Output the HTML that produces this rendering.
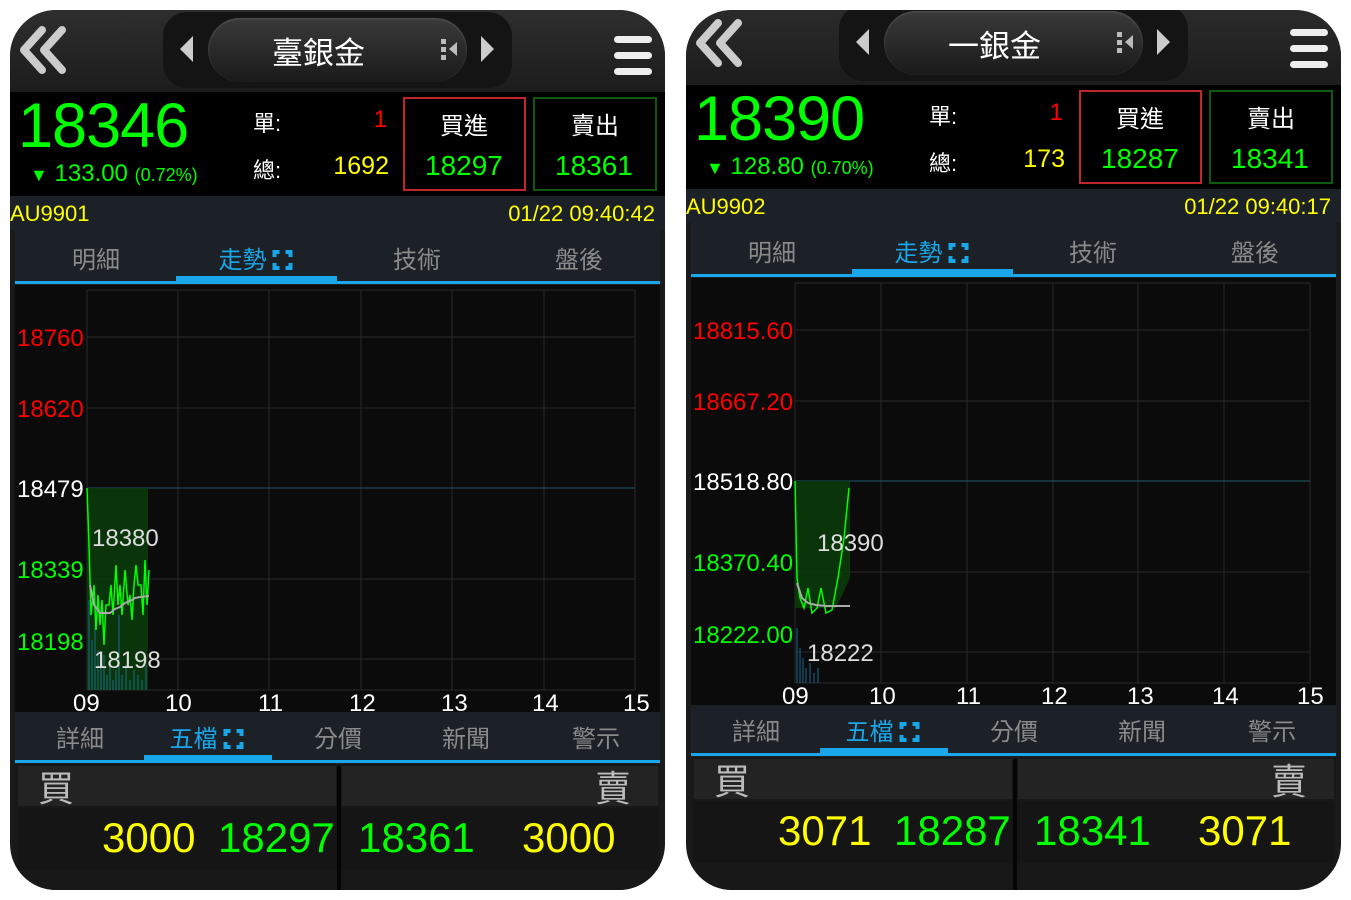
<!DOCTYPE html>
<html><head><meta charset="utf-8"><style>
*{margin:0;padding:0;box-sizing:border-box}
body{width:1351px;height:900px;background:#fff;position:relative;overflow:hidden;font-family:"Liberation Sans","Noto Sans CJK TC",sans-serif}
.p{position:absolute;top:10px;width:655px;height:880px;border-radius:46px;overflow:hidden;background:#1a1a1a}
.in{position:absolute;left:0;top:0;width:655px;height:900px}
.a{position:absolute;white-space:nowrap}
.hdr{position:absolute;left:0;top:0;width:655px;height:82px;background:linear-gradient(#2e2e2e,#1c1c1c)}
.pc{position:absolute;left:153px;top:2px;width:349px;height:76px;border-radius:24px;background:#141414}
.pi{position:absolute;left:198px;top:8px;width:259px;height:64px;border-radius:32px;background:linear-gradient(#3a3a3a,#1a1a1a);box-shadow:inset 0 1px 2px #555}
.q{position:absolute;left:0;top:82px;width:655px;height:104px;background:#000}
.info{position:absolute;left:0;top:186px;width:655px;height:34px;background:#1b2127}
.tabs{position:absolute;left:5px;top:220px;width:645px;height:55px;background:#1b2127}
.g{color:#0f0}.y{color:#ff0}.r{color:#f00}.w{color:#fff}
.tab{position:absolute;font-size:24px;color:#8a8a8a;transform:translateX(-50%)}
.act{color:#1aa7ea}
.br{display:inline-block;vertical-align:-3px;margin-left:5px}
.chart{position:absolute;left:5px;top:275px;width:645px;height:427px;background:#0b0b0b}
.bt{position:absolute;left:5px;top:702px;width:645px;height:52px;background:#1b2127}
.ob{position:absolute;left:5px;top:754px;width:645px;height:140px;background:#181818}
</style></head><body>

<!-- LEFT PANEL -->
<div class="p" style="left:10px"><div class="in">
 <div class="hdr"></div>
 <svg class="a" style="left:6px;top:16px" width="56" height="50" viewBox="0 0 56 50"><path d="M26 4 L8 24 L26 44 M46 4 L28 24 L46 44" stroke="#ccc" stroke-width="8" fill="none" stroke-linecap="round" stroke-linejoin="round"/></svg>
 <div class="pc"></div><div class="pi"></div>
 <svg class="a" style="left:168px;top:24px" width="16" height="30"><path d="M15 2 L2 15 L15 28Z" fill="#ccc"/></svg>
 <svg class="a" style="left:470px;top:24px" width="16" height="30"><path d="M1 2 L14 15 L1 28Z" fill="#ccc"/></svg>
 <svg class="a" style="left:430px;top:28px" width="20" height="24"><rect x="1" y="1" width="5" height="5" fill="#bbb"/><rect x="1" y="9" width="5" height="5" fill="#bbb"/><rect x="1" y="17" width="5" height="5" fill="#bbb"/><path d="M17 4 L9 11 L17 18Z" fill="#bbb"/></svg>
 <div class="a w" style="left:262px;top:18px;font-size:31px">臺銀金</div>
 <svg class="a" style="left:603px;top:24px" width="40" height="44"><rect x="1" y="2" width="38" height="7" rx="3.5" fill="#eee"/><rect x="1" y="18" width="38" height="7" rx="3.5" fill="#eee"/><rect x="1" y="34" width="38" height="7" rx="3.5" fill="#eee"/></svg>
 <div class="q"></div>
 <div class="a g" style="left:8px;top:80px;font-size:63px;letter-spacing:-1px">18346</div>
 <div class="a g" style="left:20px;top:150px;font-size:24px"><span style="font-size:18px">▼</span> 133.00 <span style="font-size:18px">(0.72%)</span></div>
 <div class="a w" style="left:243px;top:96px;font-size:22px">單:</div>
 <div class="a w" style="left:243px;top:143px;font-size:22px">總:</div>
 <div class="a r" style="right:278px;top:96px;font-size:24px">1</div>
 <div class="a y" style="right:276px;top:142px;font-size:25px">1692</div>
 <div class="a" style="left:393px;top:87px;width:123px;height:94px;border:2px solid #c0262a"></div>
 <div class="a" style="left:523px;top:87px;width:124px;height:94px;border:2px solid #0e5a12"></div>
 <div class="a w" style="left:430px;top:96px;font-size:24px">買進</div>
 <div class="a g" style="left:415px;top:140px;font-size:28px">18297</div>
 <div class="a w" style="left:561px;top:96px;font-size:24px">賣出</div>
 <div class="a g" style="left:545px;top:140px;font-size:28px">18361</div>
 <div class="info"></div>
 <div class="a y" style="left:0;top:191px;font-size:22px">AU9901</div>
 <div class="a y" style="right:10px;top:191px;font-size:22px">01/22 09:40:42</div>
 <div class="tabs"></div>
 <div class="tab" style="left:86px;top:230px">明細</div>
 <div class="tab act" style="left:246px;top:230px">走勢<svg class="br" width="22" height="22"><path d="M8 3H3V8M14 3H19V8M3 14V19H8M19 14V19H14" stroke="#1aa7ea" stroke-width="4" fill="none"/></svg></div>
 <div class="tab" style="left:407px;top:230px">技術</div>
 <div class="tab" style="left:569px;top:230px">盤後</div>
 <div class="a" style="left:5px;top:271px;width:645px;height:3px;background:#1aa7ea"></div>
 <div class="a" style="left:166px;top:266px;width:161px;height:7px;background:#1aa7ea"></div>
 <div class="chart"></div>
 <svg class="a" style="left:0;top:275px" width="655" height="427">
  <g stroke="#2a2a2a" stroke-width="1">
   <line x1="77" y1="5" x2="77" y2="405"/><line x1="168" y1="5" x2="168" y2="405"/><line x1="259" y1="5" x2="259" y2="405"/><line x1="351" y1="5" x2="351" y2="405"/><line x1="442" y1="5" x2="442" y2="405"/><line x1="534" y1="5" x2="534" y2="405"/><line x1="625" y1="5" x2="625" y2="405"/>
   <line x1="77" y1="5" x2="625" y2="5"/><line x1="77" y1="52" x2="625" y2="52"/><line x1="77" y1="123" x2="625" y2="123"/><line x1="77" y1="294" x2="625" y2="294"/><line x1="77" y1="374" x2="625" y2="374"/><line x1="77" y1="405" x2="625" y2="405"/>
  </g>
  <line x1="77" y1="203" x2="625" y2="203" stroke="#1f5a6e"/>
  <path d="M77 203 L138 203 L138 405 L77 405Z" fill="#0a3a0a" opacity="0.9"/>
  <g stroke="#1a6a90" stroke-width="1"><path d="M79 405V315M82 405V355M85 405V340M88 405V365M91 405V380M94 405V370M97 405V390M100 405V375M103 405V395M106 405V385M109 405V330M112 405V390M116 405V380M120 405V395M124 405V385M128 405V390M132 405V395M136 405V380"/></g>
  <polyline fill="none" stroke="#0f0" stroke-width="1.5" points="77,203 79,260 81,330 84,300 86,345 88,310 90,340 92,315 94,360 96,320 99,320 101,300 103,330 106,280 108,320 110,300 112,330 115,285 118,320 120,310 122,335 124,300 126,280 128,300 131,300 133,330 135,275 137,320 139,285"/>
  <polyline fill="none" stroke="#aaa" stroke-width="2" points="80,300 84,320 90,328 100,328 105,324 110,322 115,318 120,316 125,313 130,312 139,311"/>
  <g font-size="24" font-family="Liberation Sans,sans-serif">
   <text x="7" y="61" fill="#f00">18760</text><text x="7" y="132" fill="#f00">18620</text><text x="7" y="212" fill="#fff">18479</text><text x="7" y="293" fill="#0f0">18339</text><text x="7" y="365" fill="#0f0">18198</text>
   <text x="82" y="261" fill="#ddd">18380</text><text x="84" y="383" fill="#ddd">18198</text>
   <g fill="#fff"><text x="63" y="426">09</text><text x="155" y="426">10</text><text x="248" y="426">11</text><text x="339" y="426">12</text><text x="431" y="426">13</text><text x="522" y="426">14</text><text x="613" y="426">15</text></g>
  </g>
 </svg>
 <div class="bt"></div>
 <div class="tab" style="left:70px;top:709px">詳細</div>
 <div class="tab act" style="left:197px;top:709px">五檔<svg class="br" width="22" height="22"><path d="M8 3H3V8M14 3H19V8M3 14V19H8M19 14V19H14" stroke="#1aa7ea" stroke-width="4" fill="none"/></svg></div>
 <div class="tab" style="left:328px;top:709px">分價</div>
 <div class="tab" style="left:456px;top:709px">新聞</div>
 <div class="tab" style="left:586px;top:709px">警示</div>
 <div class="a" style="left:5px;top:750px;width:645px;height:3px;background:#1aa7ea"></div>
 <div class="a" style="left:134px;top:745px;width:128px;height:6px;background:#1aa7ea"></div>
 <div class="ob"></div>
 <div class="a" style="left:8px;top:756px;width:318px;height:40px;background:#232323"></div>
 <div class="a" style="left:332px;top:756px;width:316px;height:40px;background:#232323"></div>
 <div class="a" style="left:8px;top:798px;width:640px;height:62px;background:#151515"></div>
 <div class="a" style="left:327px;top:756px;width:4px;height:130px;background:#050505"></div>
 <div class="a" style="left:28px;top:750px;font-size:36px;color:#bbb">買</div>
 <div class="a" style="left:585px;top:750px;font-size:36px;color:#bbb">賣</div>
 <div class="a y" style="left:92px;top:804px;font-size:42px">3000</div>
 <div class="a g" style="left:208px;top:804px;font-size:42px">18297</div>
 <div class="a g" style="left:348px;top:804px;font-size:42px">18361</div>
 <div class="a y" style="left:512px;top:804px;font-size:42px">3000</div>
</div></div>

<!-- RIGHT PANEL -->
<div class="p" style="left:686px"><div class="in" style="top:-7px">
 <div class="hdr" style="top:-10px;height:92px"></div>
 <svg class="a" style="left:6px;top:16px" width="56" height="50" viewBox="0 0 56 50"><path d="M26 4 L8 24 L26 44 M46 4 L28 24 L46 44" stroke="#ccc" stroke-width="8" fill="none" stroke-linecap="round" stroke-linejoin="round"/></svg>
 <div class="pc"></div><div class="pi"></div>
 <svg class="a" style="left:168px;top:24px" width="16" height="30"><path d="M15 2 L2 15 L15 28Z" fill="#ccc"/></svg>
 <svg class="a" style="left:470px;top:24px" width="16" height="30"><path d="M1 2 L14 15 L1 28Z" fill="#ccc"/></svg>
 <svg class="a" style="left:430px;top:28px" width="20" height="24"><rect x="1" y="1" width="5" height="5" fill="#bbb"/><rect x="1" y="9" width="5" height="5" fill="#bbb"/><rect x="1" y="17" width="5" height="5" fill="#bbb"/><path d="M17 4 L9 11 L17 18Z" fill="#bbb"/></svg>
 <div class="a w" style="left:262px;top:18px;font-size:31px">一銀金</div>
 <svg class="a" style="left:603px;top:24px" width="40" height="44"><rect x="1" y="2" width="38" height="7" rx="3.5" fill="#eee"/><rect x="1" y="18" width="38" height="7" rx="3.5" fill="#eee"/><rect x="1" y="34" width="38" height="7" rx="3.5" fill="#eee"/></svg>
 <div class="q"></div>
 <div class="a g" style="left:8px;top:80px;font-size:63px;letter-spacing:-1px">18390</div>
 <div class="a g" style="left:20px;top:150px;font-size:24px"><span style="font-size:18px">▼</span> 128.80 <span style="font-size:18px">(0.70%)</span></div>
 <div class="a w" style="left:243px;top:96px;font-size:22px">單:</div>
 <div class="a w" style="left:243px;top:143px;font-size:22px">總:</div>
 <div class="a r" style="right:278px;top:96px;font-size:24px">1</div>
 <div class="a y" style="right:276px;top:142px;font-size:25px">173</div>
 <div class="a" style="left:393px;top:87px;width:123px;height:94px;border:2px solid #c0262a"></div>
 <div class="a" style="left:523px;top:87px;width:124px;height:94px;border:2px solid #0e5a12"></div>
 <div class="a w" style="left:430px;top:96px;font-size:24px">買進</div>
 <div class="a g" style="left:415px;top:140px;font-size:28px">18287</div>
 <div class="a w" style="left:561px;top:96px;font-size:24px">賣出</div>
 <div class="a g" style="left:545px;top:140px;font-size:28px">18341</div>
 <div class="info"></div>
 <div class="a y" style="left:0;top:191px;font-size:22px">AU9902</div>
 <div class="a y" style="right:10px;top:191px;font-size:22px">01/22 09:40:17</div>
 <div class="tabs"></div>
 <div class="tab" style="left:86px;top:230px">明細</div>
 <div class="tab act" style="left:246px;top:230px">走勢<svg class="br" width="22" height="22"><path d="M8 3H3V8M14 3H19V8M3 14V19H8M19 14V19H14" stroke="#1aa7ea" stroke-width="4" fill="none"/></svg></div>
 <div class="tab" style="left:407px;top:230px">技術</div>
 <div class="tab" style="left:569px;top:230px">盤後</div>
 <div class="a" style="left:5px;top:271px;width:645px;height:3px;background:#1aa7ea"></div>
 <div class="a" style="left:166px;top:266px;width:161px;height:7px;background:#1aa7ea"></div>
 <div class="chart"></div>
 <svg class="a" style="left:0;top:275px" width="655" height="427">
  <g stroke="#2a2a2a" stroke-width="1">
   <line x1="109" y1="5" x2="109" y2="405"/><line x1="195" y1="5" x2="195" y2="405"/><line x1="281" y1="5" x2="281" y2="405"/><line x1="367" y1="5" x2="367" y2="405"/><line x1="452" y1="5" x2="452" y2="405"/><line x1="538" y1="5" x2="538" y2="405"/><line x1="624" y1="5" x2="624" y2="405"/>
   <line x1="109" y1="5" x2="624" y2="5"/><line x1="109" y1="52" x2="624" y2="52"/><line x1="109" y1="123" x2="624" y2="123"/><line x1="109" y1="294" x2="624" y2="294"/><line x1="109" y1="374" x2="624" y2="374"/><line x1="109" y1="405" x2="624" y2="405"/>
  </g>
  <line x1="109" y1="203" x2="624" y2="203" stroke="#1f5a6e"/>
  <path d="M109 203 L164 203 L164 300 L150 330 L109 330Z" fill="#0a3a0a" opacity="0.9"/>
  <g stroke="#1a6a90" stroke-width="1"><path d="M111 405V350M114 405V370M117 405V380M120 405V390M124 405V385M128 405V395M132 405V390"/></g>
  <polyline fill="none" stroke="#0f0" stroke-width="1.5" points="109,203 111,300 114,320 118,330 122,310 126,335 131,330 135,310 140,335 146,332 152,300 158,260 163,210"/>
  <polyline fill="none" stroke="#aaa" stroke-width="2" points="111,305 116,320 122,325 130,327 140,328 164,328"/>
  <g font-size="24" font-family="Liberation Sans,sans-serif">
   <text x="7" y="61" fill="#f00">18815.60</text><text x="7" y="132" fill="#f00">18667.20</text><text x="7" y="212" fill="#fff">18518.80</text><text x="7" y="293" fill="#0f0">18370.40</text><text x="7" y="365" fill="#0f0">18222.00</text>
   <text x="131" y="273" fill="#ddd">18390</text><text x="121" y="383" fill="#ddd">18222</text>
   <g fill="#fff"><text x="96" y="426">09</text><text x="183" y="426">10</text><text x="270" y="426">11</text><text x="355" y="426">12</text><text x="441" y="426">13</text><text x="526" y="426">14</text><text x="611" y="426">15</text></g>
  </g>
 </svg>
 <div class="bt"></div>
 <div class="tab" style="left:70px;top:709px">詳細</div>
 <div class="tab act" style="left:197px;top:709px">五檔<svg class="br" width="22" height="22"><path d="M8 3H3V8M14 3H19V8M3 14V19H8M19 14V19H14" stroke="#1aa7ea" stroke-width="4" fill="none"/></svg></div>
 <div class="tab" style="left:328px;top:709px">分價</div>
 <div class="tab" style="left:456px;top:709px">新聞</div>
 <div class="tab" style="left:586px;top:709px">警示</div>
 <div class="a" style="left:5px;top:750px;width:645px;height:3px;background:#1aa7ea"></div>
 <div class="a" style="left:134px;top:745px;width:128px;height:6px;background:#1aa7ea"></div>
 <div class="ob"></div>
 <div class="a" style="left:8px;top:756px;width:318px;height:40px;background:#232323"></div>
 <div class="a" style="left:332px;top:756px;width:316px;height:40px;background:#232323"></div>
 <div class="a" style="left:8px;top:798px;width:640px;height:62px;background:#151515"></div>
 <div class="a" style="left:327px;top:756px;width:4px;height:140px;background:#050505"></div>
 <div class="a" style="left:28px;top:750px;font-size:36px;color:#bbb">買</div>
 <div class="a" style="left:585px;top:750px;font-size:36px;color:#bbb">賣</div>
 <div class="a y" style="left:92px;top:804px;font-size:42px">3071</div>
 <div class="a g" style="left:208px;top:804px;font-size:42px">18287</div>
 <div class="a g" style="left:348px;top:804px;font-size:42px">18341</div>
 <div class="a y" style="left:512px;top:804px;font-size:42px">3071</div>
</div></div>

</body></html>
